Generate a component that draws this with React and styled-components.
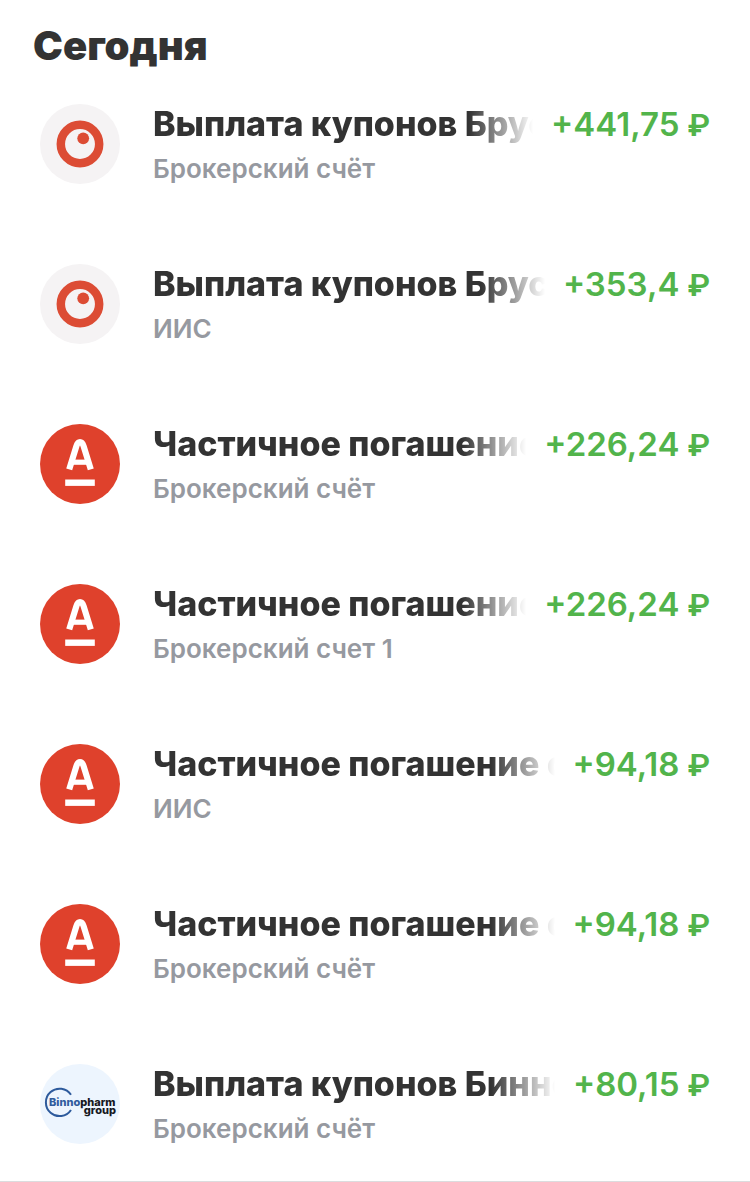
import React from 'react';
import styled, { createGlobalStyle } from 'styled-components';

const GlobalStyle = createGlobalStyle`
  * {
    box-sizing: border-box;
  }

  body {
    margin: 0;
    background: #fff;
    font-family: Inter, 'Noto Sans', sans-serif;
  }
`;

const Page = styled.main`
  border-bottom: 1px solid #dcdcde;
`;

const Heading = styled.h1`
  margin: 0;
  padding: 22px 33px 0;
  color: #333;
  font-size: 40px;
  font-weight: 900;
  line-height: 48px;
`;

const OperationList = styled.ul`
  margin: 0;
  padding: 14px 40px 0;
  list-style: none;
`;

const Operation = styled.li`
  display: flex;
  gap: 33px;
  padding: 20px 0 58px;

  &:last-child {
    padding-bottom: 35px;
  }
`;

const Logo = styled.svg`
  flex: none;
  width: 80px;
  height: 80px;
`;

const Details = styled.div`
  flex: 1;
  min-width: 0;
`;

const TitleRow = styled.div`
  display: flex;
  gap: 18px;
  line-height: 40px;
  white-space: nowrap;
`;

// Long names fade out before the amount
const Title = styled.span`
  flex: 1;
  min-width: 0;
  overflow: hidden;
  color: #333;
  font-size: 34px;
  font-weight: 800;
  mask-image: linear-gradient(to left, transparent, #000 64px);
`;

const Amount = styled.span`
  color: #52b44b;
  font-size: 33px;
  font-weight: 600;
`;

const Currency = styled.span`
  font-family: Roboto, Inter, sans-serif;
  font-size: 32px;
  line-height: 1;
`;

const Account = styled.div`
  margin-top: 8px;
  color: #9699a0;
  font-size: 26px;
  font-weight: 600;
  line-height: 34px;
`;

const BrusnikaLogo = () => (
  <Logo viewBox="0 0 80 80" aria-hidden="true">
    <circle cx="40" cy="40" r="40" fill="#f5f3f4" />
    <circle cx="40" cy="40" r="19.2" fill="none" stroke="#dc4c34" strokeWidth="8.5" />
    <circle cx="43.2" cy="34.3" r="5.9" fill="#dc4c34" />
  </Logo>
);

const AlfaLogo = () => (
  <Logo viewBox="0 0 80 80" aria-hidden="true">
    <circle cx="40" cy="40" r="40" fill="#df412c" />
    <path d="M29.2 45.4 36.4 22.2Q37.7 18 40 18T43.6 22.2L50.8 45.4" fill="none" stroke="#fff" strokeWidth="6.2" />
    <path d="M32.5 38.2H47.5" stroke="#fff" strokeWidth="5.2" />
    <path d="M25.2 58.7H54.8" stroke="#fff" strokeWidth="6.4" />
  </Logo>
);

const BinnopharmLogo = () => (
  <Logo viewBox="0 0 80 80" role="img" aria-label="Binnopharm group">
    <circle cx="40" cy="40" r="40" fill="#edf5fe" />
    <path d="M31 30.8A13.7 13.7 0 1 0 31 46" fill="none" stroke="#2d5a9c" strokeWidth="2" />
    <text x="9" y="42" fontFamily="Inter, sans-serif" fontSize="11" fontWeight="800" fill="#17191e">
      <tspan fill="#315c9d">Binno</tspan>pharm
    </text>
    <text x="76" y="50" textAnchor="end" fontFamily="Inter, sans-serif" fontSize="11" fontWeight="800" fill="#17191e">
      group
    </text>
  </Logo>
);

const logos = {
  brusnika: BrusnikaLogo,
  alfa: AlfaLogo,
  binnopharm: BinnopharmLogo,
};

const operations = [
  { logo: 'brusnika', title: 'Выплата купонов Брусника', amount: '+441,75', account: 'Брокерский счёт' },
  { logo: 'brusnika', title: 'Выплата купонов Брусника', amount: '+353,4', account: 'ИИС' },
  { logo: 'alfa', title: 'Частичное погашение облигаций', amount: '+226,24', account: 'Брокерский счёт' },
  { logo: 'alfa', title: 'Частичное погашение облигаций', amount: '+226,24', account: 'Брокерский счет 1' },
  { logo: 'alfa', title: 'Частичное погашение облигаций', amount: '+94,18', account: 'ИИС' },
  { logo: 'alfa', title: 'Частичное погашение облигаций', amount: '+94,18', account: 'Брокерский счёт' },
  { logo: 'binnopharm', title: 'Выплата купонов Биннофарм', amount: '+80,15', account: 'Брокерский счёт' },
];

const App = () => {
  return (
    <>
      <GlobalStyle />
      <Page>
        <Heading>Сегодня</Heading>
        <OperationList>
          {operations.map(({ logo, title, amount, account }, index) => {
            const CompanyLogo = logos[logo];
            return (
              <Operation key={index}>
                <CompanyLogo />
                <Details>
                  <TitleRow>
                    <Title>{title}</Title>
                    <Amount>
                      {amount} <Currency>₽</Currency>
                    </Amount>
                  </TitleRow>
                  <Account>{account}</Account>
                </Details>
              </Operation>
            );
          })}
        </OperationList>
      </Page>
    </>
  );
};

export default App;
